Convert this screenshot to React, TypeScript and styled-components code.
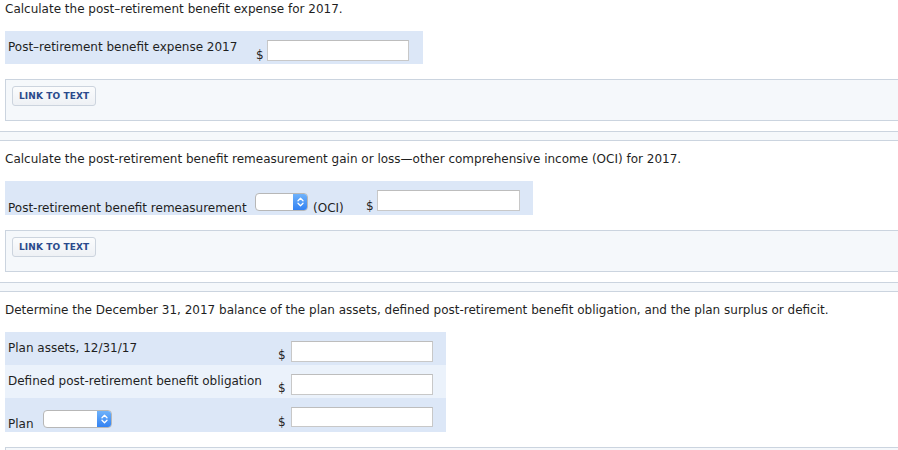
import React from "react";
import styled, {createGlobalStyle} from "styled-components";

const GlobalStyle = createGlobalStyle`
    html, body {
        margin: 0;
        padding: 0;
        overflow: hidden;
        background: #ffffff;
    }
    body {
        font-family: "DejaVu Sans", Verdana, sans-serif;
        font-size: 12px;
        color: #1f1f1f;
    }
`

const Page = styled.div`
    padding-top: 1px;
    width: 100%;
`

const Section = styled.div`
    padding-left: 5px;
`

const Question = styled.p`
    margin: 0;
    line-height: 16px;
`

const Table = styled.div<{ $width: number }>`
    margin-top: 14px;
    width: ${props => props.$width}px;
    display: flex;
    flex-direction: column;
`

const Row = styled.div<{ $height: number, $alt?: boolean }>`
    display: flex;
    height: ${props => props.$height}px;
    background-color: ${props => props.$alt ? '#ebf2fb' : '#dce7f7'};
`

const LabelCell = styled.div<{ $width: number }>`
    width: ${props => props.$width}px;
    flex-shrink: 0;
    box-sizing: border-box;
    padding: 8px 0 0 3px;
    line-height: 16px;
    white-space: nowrap;
`

const InlineCell = styled.div<{ $width: number, $pad?: number }>`
    width: ${props => props.$width}px;
    flex-shrink: 0;
    box-sizing: border-box;
    padding: 0 0 4px ${props => props.$pad ?? 3}px;
    display: flex;
    align-items: flex-end;
    white-space: nowrap;
`

const InlineText = styled.span<{ $drop?: number }>`
    line-height: 16px;
    margin-bottom: -${props => props.$drop ?? 4}px;
`

const DollarCell = styled.div<{ $width: number, $bottom: number }>`
    width: ${props => props.$width}px;
    flex-shrink: 0;
    align-self: flex-end;
    line-height: 16px;
    padding-bottom: ${props => props.$bottom}px;
`

const FieldCell = styled.div<{ $top?: number, $bottom?: number, $right: number }>`
    display: flex;
    align-items: ${props => props.$bottom !== undefined ? 'flex-end' : 'flex-start'};
    padding: ${props => props.$top ?? 0}px ${props => props.$right}px ${props => props.$bottom ?? 0}px 1px;
`

const Input = styled.input<{ $width: number, $height: number }>`
    box-sizing: border-box;
    width: ${props => props.$width}px;
    height: ${props => props.$height}px;
    margin: 0;
    padding: 0 3px;
    border: 1px solid #c8c8c8;
    border-top-color: #bdbdbd;
    background: #ffffff;
    outline: none;
    font: inherit;
`

const SelectBox = styled.div<{ $width: number, $gap: number }>`
    box-sizing: border-box;
    width: ${props => props.$width}px;
    height: 18px;
    margin-left: ${props => props.$gap}px;
    display: flex;
    justify-content: flex-end;
    border: 1px solid #b7b7b7;
    border-radius: 4px;
    background: #ffffff;
    overflow: hidden;
    flex-shrink: 0;
`

const SelectArrows = styled.div`
    width: 15px;
    margin: -1px -1px -1px 0;
    display: flex;
    align-items: center;
    justify-content: center;
    background: linear-gradient(#72b5fb, #2f7ff2);
    border-radius: 0 4px 4px 0;
`

const LinkBox = styled.div`
    margin-top: 15px;
    width: calc(100% + 20px);
    min-height: 42px;
    box-sizing: border-box;
    border: 1px solid #cbd4df;
    background-color: #f5f8fb;
    padding: 6px 0 14px 6px;
`

const LinkButton = styled.button`
    height: 20px;
    box-sizing: border-box;
    padding: 0 6px;
    margin: 0;
    border: 1px solid #ccd4de;
    border-radius: 3px;
    background: linear-gradient(#fbfcfd, #eef1f5);
    font-family: "DejaVu Sans", Verdana, sans-serif;
    font-size: 9px;
    font-weight: bold;
    letter-spacing: 0.1px;
    color: #2a4a8c;
    line-height: 18px;
    cursor: pointer;
`

const Separator = styled.div`
    margin: 10px 0;
    height: 10px;
    box-sizing: border-box;
    border-top: 1px solid #cbd4df;
    border-bottom: 1px solid #cbd4df;
    background-color: #f5f8fb;
`

function Select({width, gap}: { width: number, gap: number }) {
    return <SelectBox $width={width} $gap={gap}>
        <SelectArrows>
            <svg width="7" height="10" viewBox="0 0 7 10" fill="none" stroke="#ffffff" strokeWidth="1.3"
                 strokeLinecap="round" strokeLinejoin="round">
                <path d="M1 3.8 L3.5 1.3 L6 3.8"/>
                <path d="M1 6.2 L3.5 8.7 L6 6.2"/>
            </svg>
        </SelectArrows>
    </SelectBox>
}

function LinkToText() {
    return <LinkBox>
        <LinkButton>LINK TO TEXT</LinkButton>
    </LinkBox>
}

export default function App() {
    return <Page>
        <GlobalStyle/>
        <Section>
            <Question>Calculate the post–retirement benefit expense for 2017.</Question>
            <Table $width={418}>
                <Row $height={33}>
                    <LabelCell $width={251}>Post–retirement benefit expense 2017</LabelCell>
                    <DollarCell $width={10} $bottom={1}>$</DollarCell>
                    <FieldCell $top={9} $right={14}>
                        <Input $width={142} $height={21}/>
                    </FieldCell>
                </Row>
            </Table>
            <LinkToText/>
        </Section>
        <Separator/>
        <Section>
            <Question>
                Calculate the post-retirement benefit remeasurement gain or loss—other comprehensive income (OCI) for 2017.
            </Question>
            <Table $width={528}>
                <Row $height={34}>
                    <InlineCell $width={250}>
                        <InlineText $drop={5}>Post-retirement benefit remeasurement</InlineText>
                    </InlineCell>
                    <InlineCell $width={53} $pad={0}>
                        <Select width={53} gap={0}/>
                    </InlineCell>
                    <InlineCell $width={58} $pad={5}>
                        <InlineText $drop={5}>(OCI)</InlineText>
                    </InlineCell>
                    <DollarCell $width={10} $bottom={1}>$</DollarCell>
                    <FieldCell $bottom={4} $right={13}>
                        <Input $width={143} $height={21}/>
                    </FieldCell>
                </Row>
            </Table>
            <LinkToText/>
        </Section>
        <Separator/>
        <Section>
            <Question>
                Determine the December 31, 2017 balance of the plan assets, defined post-retirement benefit obligation, and the plan surplus or deficit.
            </Question>
            <Table $width={441}>
                <Row $height={33}>
                    <LabelCell $width={273}>Plan assets, 12/31/17</LabelCell>
                    <DollarCell $width={12} $bottom={2}>$</DollarCell>
                    <FieldCell $top={9} $right={13}>
                        <Input $width={142} $height={21}/>
                    </FieldCell>
                </Row>
                <Row $height={33} $alt>
                    <LabelCell $width={273}>Defined post-retirement benefit obligation</LabelCell>
                    <DollarCell $width={12} $bottom={2}>$</DollarCell>
                    <FieldCell $top={9} $right={13}>
                        <Input $width={142} $height={21}/>
                    </FieldCell>
                </Row>
                <Row $height={34}>
                    <InlineCell $width={273}>
                        <InlineText>Plan</InlineText>
                        <Select width={69} gap={9}/>
                    </InlineCell>
                    <DollarCell $width={12} $bottom={2}>$</DollarCell>
                    <FieldCell $bottom={5} $right={13}>
                        <Input $width={142} $height={20}/>
                    </FieldCell>
                </Row>
            </Table>
            <LinkBox/>
        </Section>
    </Page>
}
